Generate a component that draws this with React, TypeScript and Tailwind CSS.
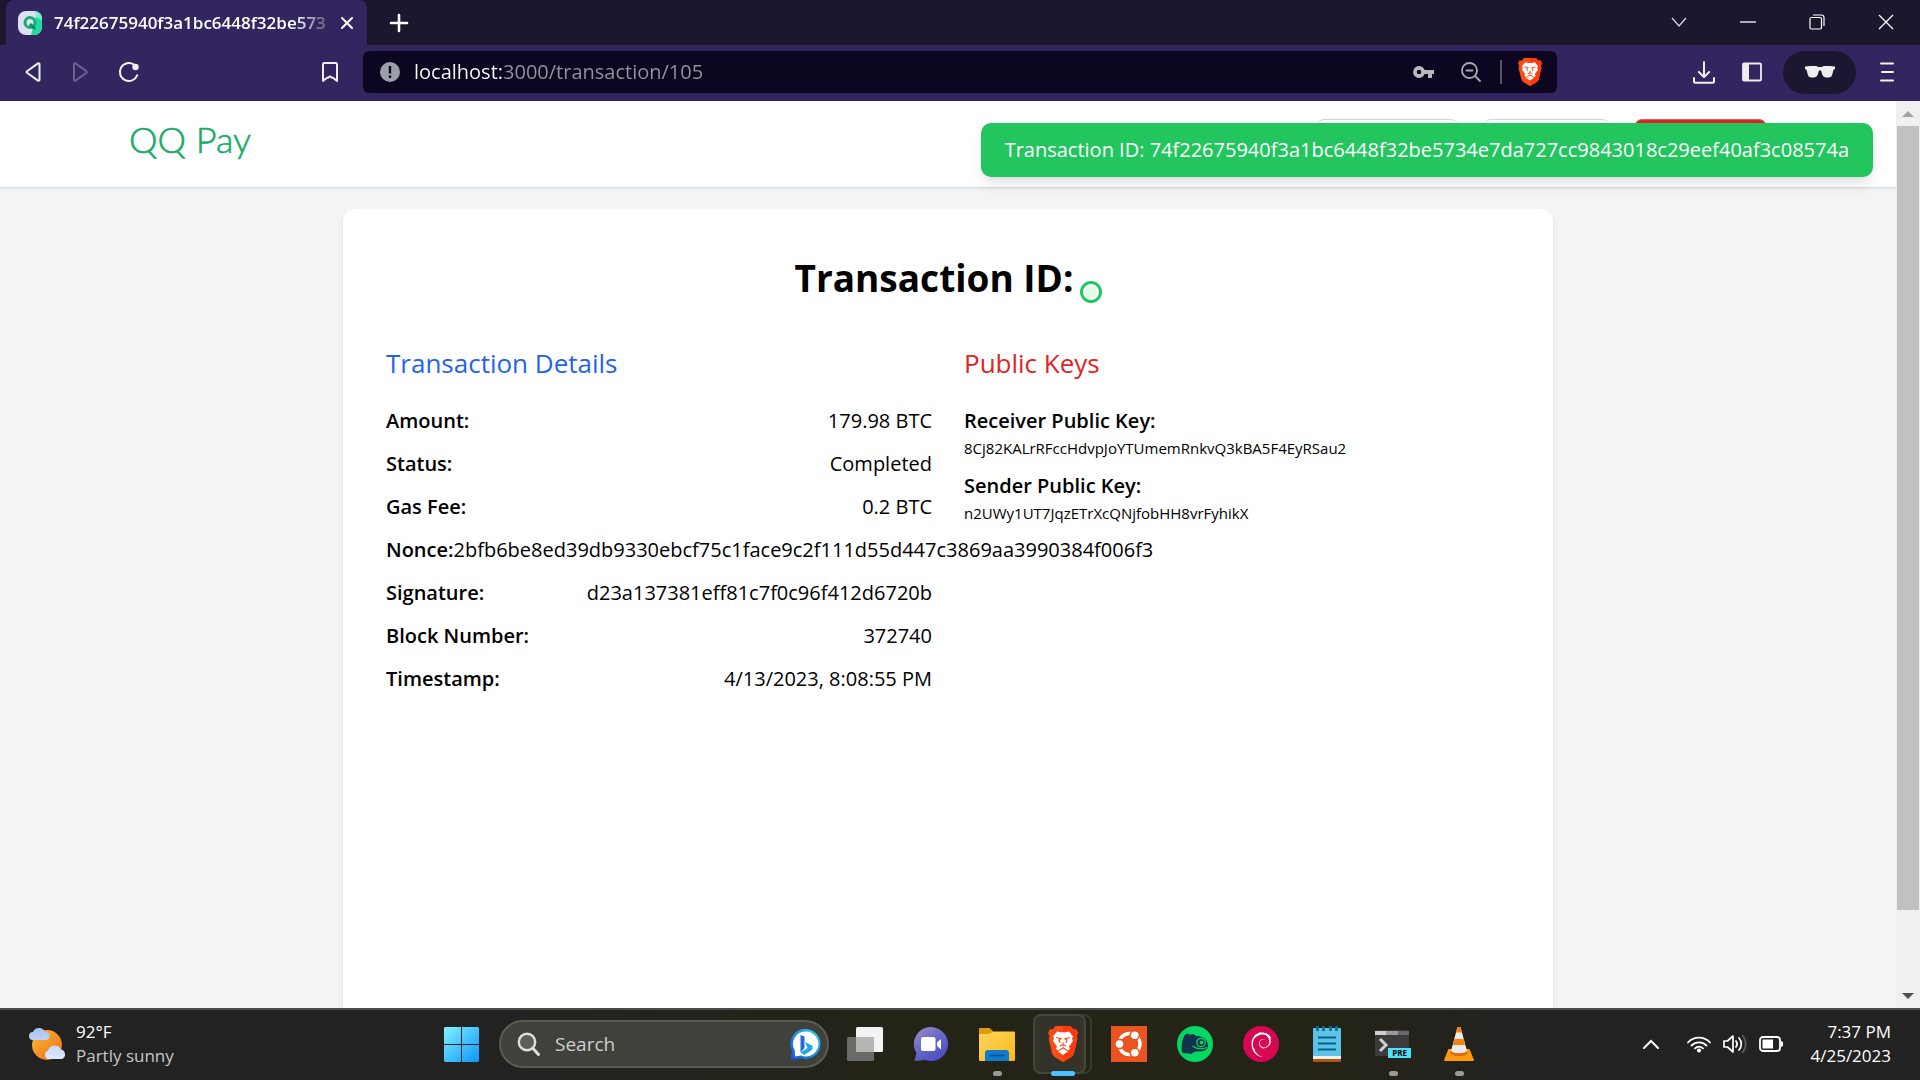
import React from "react";
import { SiDebian } from "react-icons/si";

const details: [string, string][] = [
  ["Amount:", "179.98 BTC"],
  ["Status:", "Completed"],
  ["Gas Fee:", "0.2 BTC"],
  ["Nonce:", "2bfb6be8ed39db9330ebcf75c1face9c2f111d55d447c3869aa3990384f006f3"],
  ["Signature:", "d23a137381eff81c7f0c96f412d6720b"],
  ["Block Number:", "372740"],
  ["Timestamp:", "4/13/2023, 8:08:55 PM"],
];

const keys: [string, string][] = [
  ["Receiver Public Key:", "8Cj82KALrRFccHdvpJoYTUmemRnkvQ3kBA5F4EyRSau2"],
  ["Sender Public Key:", "n2UWy1UT7JqzETrXcQNjfobHH8vrFyhikX"],
];

function IconButton({ label, className, children }: { label: string; className: string; children: React.ReactNode }) {
  return (
    <button type="button" aria-label={label} className={`flex shrink-0 items-center justify-center ${className}`}>
      {children}
    </button>
  );
}

function TabStrip() {
  return (
    <div className="flex h-[45px] shrink-0 bg-[#1a172e] pl-[6px] text-white">
      <div className="flex w-[361px] shrink-0 items-center rounded-t-lg bg-[#332560] pr-[6px] pl-3">
        <svg width="24" height="24" viewBox="0 0 24 24" className="shrink-0" aria-hidden="true">
          <defs>
            <clipPath id="fav">
              <rect width="24" height="24" rx="8" />
            </clipPath>
          </defs>
          <g clipPath="url(#fav)">
            <rect width="24" height="24" fill="#d9e2ee" />
            <path d="M19 2 13 24H24V2z" fill="#21dba0" />
            <path d="M17 0 24 0 24 9 18 6z" fill="#7fedc8" />
            <circle cx="12" cy="11.500" r="5" fill="none" stroke="#18a97c" strokeWidth="3" />
            <path d="m12 13 5 5" stroke="#138a66" strokeWidth="3" />
          </g>
        </svg>
        <span className="ml-3 min-w-0 flex-1 font-semibold whitespace-nowrap text-[17px] leading-6 [mask-image:linear-gradient(90deg,#000_88%,#0004)]">
          74f22675940f3a1bc6448f32be573
        </span>
        <IconButton label="Close tab" className="ml-[7px] h-8 w-7">
          <svg width="14" height="14" viewBox="0 0 14 14" stroke="#fff" strokeWidth="2" strokeLinecap="round" aria-hidden="true">
            <path d="m2 2 10 10M12 2 2 12" />
          </svg>
        </IconButton>
      </div>
      <IconButton label="New tab" className="ml-[14px] w-9">
        <svg width="20" height="20" viewBox="0 0 20 20" stroke="#fff" strokeWidth="2.600" strokeLinecap="round" aria-hidden="true">
          <path d="M10 2v16M2 10h16" />
        </svg>
      </IconButton>
      <div className="ml-auto flex pb-[2px]">
        <IconButton label="Search tabs" className="w-[69px]">
          <svg width="16" height="12" viewBox="0 0 16 12" fill="none" stroke="#ddd" strokeWidth="1.200" aria-hidden="true">
            <path d="m1 2 7 8 7-8" />
          </svg>
        </IconButton>
        <IconButton label="Minimize" className="w-[69px]">
          <svg width="16" height="16" viewBox="0 0 16 16" aria-hidden="true">
            <path d="M0 8h16" stroke="#fff" strokeWidth="1.300" />
          </svg>
        </IconButton>
        <IconButton label="Restore" className="w-[69px]">
          <svg width="16" height="16" viewBox="0 0 16 16" fill="none" stroke="#fff" strokeWidth="1.200" aria-hidden="true">
            <rect x="1" y="3.500" width="11.500" height="11.500" rx="1.500" />
            <path d="M4 1h8.500a2.500 2.500 0 0 1 2.500 2.500V12" />
          </svg>
        </IconButton>
        <IconButton label="Close window" className="w-[69px]">
          <svg width="16" height="16" viewBox="0 0 16 16" stroke="#fff" strokeWidth="1.300" aria-hidden="true">
            <path d="m1 1 14 14M15 1 1 15" />
          </svg>
        </IconButton>
      </div>
    </div>
  );
}

function Toolbar() {
  return (
    <div className="flex h-14 shrink-0 items-center bg-[#332560] pb-[2px]">
      <div className="flex w-[363px] shrink-0 items-center pr-[9px] pl-[9px]">
        <IconButton label="Back" className="h-10 w-12">
          <svg width="20" height="22" viewBox="0 0 20 22" fill="none" stroke="#eee" strokeWidth="2" strokeLinejoin="round" aria-hidden="true">
            <path d="M16.500 3v16a1 1 0 0 1-1.500.6L4 11.800a1 1 0 0 1 0-1.600L15 2.400a1 1 0 0 1 1.500.6z" />
          </svg>
        </IconButton>
        <IconButton label="Forward" className="h-10 w-12">
          <svg width="20" height="22" viewBox="0 0 20 22" fill="none" stroke="#6d628f" strokeWidth="2" strokeLinejoin="round" aria-hidden="true">
            <path d="M3 3v16a1 1 0 0 0 1.500.6l11-7.800a1 1 0 0 0 0-1.600l-11-7.800A1 1 0 0 0 3 3z" />
          </svg>
        </IconButton>
        <IconButton label="Reload" className="h-10 w-12">
          <svg width="22" height="22" viewBox="0 0 22 22" aria-hidden="true">
            <path d="M19.300 14.200A9 9 0 1 1 16 3.600" fill="none" stroke="#f2f2f2" strokeWidth="2" strokeLinecap="round" />
            <circle cx="17.500" cy="6" r="3.200" fill="#f2f2f2" />
          </svg>
        </IconButton>
        <IconButton label="Bookmark this page" className="ml-auto h-10 w-12">
          <svg width="18" height="22" viewBox="0 0 18 22" fill="none" stroke="#eee" strokeWidth="2" strokeLinejoin="round" aria-hidden="true">
            <path d="M2 3.200A1.200 1.200 0 0 1 3.200 2h11.600A1.200 1.200 0 0 1 16 3.200V20l-4-3.200H11L9 15.200 7 16.800H6L2 20z" />
          </svg>
        </IconButton>
      </div>
      <div className="flex h-[42px] min-w-0 flex-1 items-center rounded-md bg-[#0d0621] pr-[15px] pl-[17px]">
        <svg width="20" height="20" viewBox="0 0 20 20" className="shrink-0" aria-hidden="true">
          <circle cx="10" cy="10" r="10" fill="#9aa0a6" />
          <path d="M10 4v7.500M10 13.500v2.500" stroke="#0d0621" strokeWidth="2.400" />
        </svg>
        <input
          aria-label="Address"
          defaultValue="localhost:3000/transaction/105"
          className="ml-[14px] min-w-0 flex-1 bg-[linear-gradient(90deg,#fff_88px,#96939f_88px)] bg-clip-text text-[20px] leading-7 text-transparent outline-none"
        />
        <IconButton label="Passwords" className="h-8 w-12">
          <svg width="22" height="14" viewBox="0 0 22 14" aria-hidden="true">
            <path d="M12.700 5A6 6 0 1 0 12.700 9H16v4h4V9h2V5zM7 9.200a2.200 2.200 0 1 1 0-4.400 2.200 2.200 0 0 1 0 4.400z" fill="#b9b7be" />
          </svg>
        </IconButton>
        <IconButton label="Zoom" className="h-8 w-12">
          <svg width="22" height="22" viewBox="0 0 22 22" fill="none" stroke="#a9a7b0" strokeWidth="1.800" strokeLinecap="round" aria-hidden="true">
            <circle cx="9.500" cy="9.500" r="7.500" />
            <path d="m15 15 5 5M6.500 9.500h6" />
          </svg>
        </IconButton>
        <span className="ml-[5px] h-6 w-[2px] bg-[#57535f]" />
        <IconButton label="Brave Shields" className="ml-4 h-8 w-6">
          <BraveLion className="h-7 w-6" />
        </IconButton>
      </div>
      <div className="flex w-[363px] shrink-0 items-center justify-end pr-[9px]">
        <IconButton label="Downloads" className="h-10 w-12">
          <svg width="24" height="24" viewBox="0 0 24 24" fill="none" stroke="#eee" strokeWidth="2" strokeLinecap="round" strokeLinejoin="round" aria-hidden="true">
            <path d="M12 2v14.500M6.800 12l5.200 5 5.200-5M2 18v3.200a1.500 1.500 0 0 0 1.500 1.500h17a1.500 1.500 0 0 0 1.500-1.500V18" />
          </svg>
        </IconButton>
        <IconButton label="Sidebar" className="h-10 w-12">
          <svg width="20" height="20" viewBox="0 0 20 20" aria-hidden="true">
            <rect x="1" y="1.500" width="18" height="17" rx="1" fill="none" stroke="#eee" strokeWidth="1.800" />
            <path d="M1 1.500h6v17H1z" fill="#eee" />
          </svg>
        </IconButton>
        <IconButton label="Private window" className="mx-[7px] h-[43px] w-[73px] rounded-full bg-[#1c1731]">
          <svg width="30" height="12" viewBox="0 0 30 12" aria-hidden="true">
            <path d="M0 .5 5 0h6l2.500 1h3L19 0h6l5 .5v2.500l-1.500.8-1.300 5A3.500 3.500 0 0 1 24 11.500h-3a4 4 0 0 1-3.700-2.700L16.200 5a1.300 1.300 0 0 0-2.400 0l-1.100 3.800A4 4 0 0 1 9 11.500H6a3.500 3.500 0 0 1-3.200-2.700L1.500 3.800 0 3z" fill="#eee" />
          </svg>
        </IconButton>
        <IconButton label="Menu" className="h-10 w-12">
          <svg width="16" height="20" viewBox="0 0 16 20" stroke="#f2f2f2" strokeWidth="2" strokeLinecap="round" aria-hidden="true">
            <path d="M2 1.500h12M3 10h11M2 18.500h12" />
          </svg>
        </IconButton>
      </div>
    </div>
  );
}

function BraveLion({ className }: { className: string }) {
  return (
    <svg viewBox="0 0 30 36" preserveAspectRatio="none" className={className} aria-hidden="true">
      <path d="M7.500 0h15l3 3.500 2.500-.5 2 4-1.500 3 .8 3L26 27c-.5 2-2 3.500-3.500 4.500L15 36l-7.500-4.500C6 30.500 4.500 29 4 27L.7 13l.8-3L0 7l2-4 2.500.5z" fill="#fb4c13" />
      <path d="M15 0h7.500l3 3.500 2.500-.5 2 4-1.500 3 .8 3L26 27c-.5 2-2 3.500-3.500 4.500L15 36z" fill="#ff3a10" />
      <path d="m9 5.500 3.500.8h5L21 5.500l4 5-1 2 1 2.500-4 5.500 1 2.500-2 1.500-5-3.500-5 3.500-2-1.500 1-2.500L5 15l1-2.500-1-2z" fill="#fff" />
      <path d="m15 22.500 5 3-5 3.500-5-3.500z" fill="#fff" />
      <path d="m8 11.500 5 1.200-2 1.300 1 2.800M22 11.500l-5 1.200 2 1.300-1 2.800M12 20l3-1 3 1M15 16.500V19" fill="none" stroke="#fb4c13" strokeWidth="1.200" />
    </svg>
  );
}

function SiteHeader() {
  return (
    <header className="flex h-[86px] items-start justify-between bg-white px-[129px] pt-[18px] shadow-sm">
      <a href="#home" className="font-[Lato] text-[36px] leading-10 font-light text-[#1bab68] [-webkit-text-stroke:0.6px_#1bab68]">
        QQ Pay
      </a>
      <nav className="flex gap-6">
        <button type="button" aria-label="Dashboard" className="h-[50px] w-[143px] rounded-lg border border-[#d1d5db]" />
        <button type="button" aria-label="Profile" className="h-[50px] w-[127px] rounded-lg border border-[#d1d5db]" />
        <button type="button" aria-label="Log out" className="h-[50px] w-[133px] rounded-lg border border-[#e05a5a] bg-[#dc2626]" />
      </nav>
    </header>
  );
}

function TransactionCard() {
  return (
    <main className="mx-auto mt-[22px] min-h-[1000px] w-[1210px] max-w-full rounded-xl bg-white px-[43px] pt-[44px] text-black shadow-md">
      <h1 className="flex items-end justify-center gap-[6px] text-[37px] leading-[50px] font-bold">
        Transaction ID:
        <button
          type="button"
          aria-label="Show transaction ID"
          className="size-[22px] rounded-full border-[3px] border-[#22c55e] bg-[#dcfce7] bg-clip-content p-[2px]"
        />
      </h1>
      <div className="mt-[41px] grid grid-cols-2 gap-8">
        <section>
          <h2 className="mb-[23px] text-[26px] leading-[38px] font-medium text-[#2563eb]">Transaction Details</h2>
          <dl>
            {details.map(([name, value]) => (
              <div key={name} className="mb-[11px] flex justify-between text-[20px] leading-8">
                <dt className="font-semibold">{name}</dt>
                <dd>{value}</dd>
              </div>
            ))}
          </dl>
        </section>
        <section>
          <h2 className="mb-[23px] text-[26px] leading-[38px] font-medium text-[#dc2626]">Public Keys</h2>
          <dl>
            {keys.map(([name, value]) => (
              <div key={name} className="mb-[11px]">
                <dt className="text-[20px] leading-8 font-semibold">{name}</dt>
                <dd className="text-[15px] leading-[22px]">{value}</dd>
              </div>
            ))}
          </dl>
        </section>
      </div>
    </main>
  );
}

function ScrollBar() {
  return (
    <div className="flex w-6 shrink-0 flex-col items-center bg-[#f0f0f0]" aria-hidden="true">
      <svg width="12" height="25" viewBox="0 0 12 25">
        <path d="m0 16 6-6 6 6z" fill="#a3a3a3" />
      </svg>
      <div className="w-[22px] flex-[784] bg-[#c1c1c1]" />
      <div className="flex-[73]" />
      <svg width="12" height="25" viewBox="0 0 12 25">
        <path d="m0 10 6 6 6-6z" fill="#505050" />
      </svg>
    </div>
  );
}

function TaskApp({ label, running, children }: { label: string; running?: boolean; children: React.ReactNode }) {
  return (
    <button type="button" aria-label={label} className="relative flex h-[66px] w-[66px] items-center justify-center">
      {children}
      {running && <span className="absolute bottom-[1px] h-[5px] w-[9px] rounded-full bg-[#9a9a98]" />}
    </button>
  );
}

function Taskbar() {
  return (
    <footer className="grid h-[72px] shrink-0 grid-cols-[1fr_auto_1fr] items-center border-t-2 border-[#4a4a46] bg-[linear-gradient(90deg,#222_25%,#242318_45%,#242318_70%,#222_80%)] pb-[2px] text-white">
      <button type="button" className="flex items-center gap-[10px] pl-[29px] text-left">
        <svg width="37" height="34" viewBox="0 0 37 34" aria-hidden="true">
          <defs>
            <linearGradient id="sun" x1="0" y1="0" x2="1" y2="1">
              <stop offset="0" stopColor="#f8bc3c" />
              <stop offset="1" stopColor="#ef6a10" />
            </linearGradient>
            <linearGradient id="cloud" x1="0" y1="0" x2="0" y2="1">
              <stop offset="0" stopColor="#a9c3f3" />
              <stop offset="1" stopColor="#dce9fb" />
            </linearGradient>
          </defs>
          <circle cx="18" cy="18" r="15" fill="url(#sun)" />
          <path d="M4 13a4 4 0 0 1 0-8 6.500 6.500 0 0 1 12 0 4 4 0 0 1 1 8zM19 32a4.500 4.500 0 0 1 0-8.500 7 7 0 0 1 13-1 5 5 0 0 1 1 9.500z" fill="url(#cloud)" />
        </svg>
        <span className="flex flex-col text-[17px] leading-6">
          <span>92°F</span>
          <span className="text-[#c6c6c6]">Partly sunny</span>
        </span>
      </button>
      <div className="flex items-center">
        <IconButton label="Start" className="h-[66px] w-[66px]">
          <svg width="35" height="35" viewBox="0 0 35 35" aria-hidden="true">
            <defs>
              <linearGradient id="win" x1="0" y1="0" x2="35" y2="35" gradientUnits="userSpaceOnUse">
                <stop offset="0" stopColor="#80f2ff" />
                <stop offset="1" stopColor="#0c95fb" />
              </linearGradient>
            </defs>
            <path d="M1 0h16v17H0V1zM18 0h16l1 1v16H18zM0 18h17v17H1l-1-1zM18 18h17v16l-1 1H18z" fill="url(#win)" />
          </svg>
        </IconButton>
        <label className="mr-[3px] ml-[5px] flex h-12 w-[330px] items-center rounded-full border-2 border-[#5a5a55] bg-[#41413b] pr-[6px] pl-[16px]">
          <svg width="24" height="24" viewBox="0 0 24 24" fill="none" stroke="#dedede" strokeLinecap="round" aria-hidden="true">
            <circle cx="10" cy="10" r="8.200" strokeWidth="2.400" fill="#5d5d5a" />
            <path d="m16.500 17 5 5.500" strokeWidth="3" />
          </svg>
          <input
            aria-label="Search"
            placeholder="Search"
            className="ml-[14px] min-w-0 flex-1 bg-transparent text-[19px] leading-7 outline-none placeholder:text-[#cfcfcf]"
          />
          <svg width="31" height="31" viewBox="0 0 31 31" aria-hidden="true">
            <defs>
              <linearGradient id="bing" x1="1" y1="0" x2="0" y2="1">
                <stop offset="0" stopColor="#2bd6e8" />
                <stop offset="0.500" stopColor="#1f8fea" />
                <stop offset="1" stopColor="#1a4fd0" />
              </linearGradient>
            </defs>
            <path d="M16 0a15 15 0 1 1-5 29.300c-3 .7-7 1.500-10.500 1.200L2 22A15 15 0 0 1 16 0z" fill="url(#bing)" />
            <path d="M16 2.500A12.500 12.500 0 1 1 11 26.500L5 27.500l-.2-6A12.500 12.500 0 0 1 16 2.500z" fill="#fff" />
            <path d="m10.500 6 4 1.500V19l-4 4.500z" fill="#1e6be0" />
            <path d="m10.500 23.500 7-4.500-2.500-6 7 3.500c1.500 2 .5 4.500-1.500 5.500L14 26z" fill="#24a8e8" />
          </svg>
        </label>
        <TaskApp label="Task view">
          <svg width="36" height="34" viewBox="0 0 36 34" aria-hidden="true">
            <rect x="9" y="0" width="27" height="25" rx="1.500" fill="#f3f3f3" />
            <rect x="0" y="10" width="27" height="24" rx="1.500" fill="#6a6a68" />
            <path d="M9 10h18v15H9z" fill="#b5b5b4" />
          </svg>
        </TaskApp>
        <TaskApp label="Chat">
          <svg width="34" height="34" viewBox="0 0 34 34" aria-hidden="true">
            <defs>
              <linearGradient id="chat" x1="0" y1="0" x2="0.700" y2="1">
                <stop offset="0" stopColor="#a08ec4" />
                <stop offset="0.500" stopColor="#6b6ac8" />
                <stop offset="1" stopColor="#4a4fc4" />
              </linearGradient>
            </defs>
            <path d="M17 0a17 17 0 1 1-6.500 32.700c-3 .8-7 1.300-10 1L2.500 26A17 17 0 0 1 17 0z" fill="url(#chat)" />
            <rect x="7" y="10" width="14.500" height="14" rx="2" fill="#fff" />
            <path d="M23 15.500 27 12v10.500L23 19z" fill="#fff" />
          </svg>
        </TaskApp>
        <TaskApp label="File Explorer" running>
          <svg width="36" height="33" viewBox="0 0 36 33" aria-hidden="true">
            <defs>
              <linearGradient id="folder" x1="0" y1="0" x2="1" y2="1">
                <stop offset="0" stopColor="#ffd45c" />
                <stop offset="1" stopColor="#f9b91c" />
              </linearGradient>
            </defs>
            <path d="M0 1a1 1 0 0 1 1-1h9.500l4 3.500L10 8H0z" fill="#e09b08" />
            <path d="M0 6h10l4.500-2.500H35a1 1 0 0 1 1 1V32a1 1 0 0 1-1 1H1a1 1 0 0 1-1-1z" fill="url(#folder)" />
            <path d="M6 33v-8a3 3 0 0 1 3-3h18a3 3 0 0 1 3 3v8z" fill="#0f7bcf" />
            <path d="M10.500 27.500h15" stroke="#0a4f94" strokeWidth="1.800" />
          </svg>
        </TaskApp>
        <div className="relative flex h-[66px] w-[66px] items-center">
          <span className="absolute top-[3px] left-[3px] h-[60px] w-[59px] rounded-lg border-2 border-[#3a392f]" />
          <button type="button" aria-label="Brave" className="relative ml-[3px] flex h-[60px] w-[53px] items-center justify-center rounded-lg border-2 border-[#46463c] bg-[#33332a] pl-[7px]">
            <BraveLion className="h-9 w-[30px]" />
          </button>
          <span className="absolute bottom-[1px] left-[21px] h-[5px] w-6 rounded-full bg-[#4cc2ff]" />
        </div>
        <TaskApp label="Ubuntu">
          <span className="flex size-9 items-center justify-center bg-[#e95420]">
            <svg width="28" height="28" viewBox="0 0 28 28" aria-hidden="true">
              <circle cx="14.500" cy="14" r="10.500" fill="none" stroke="#fff" strokeWidth="3.400" />
              <g fill="#fff" stroke="#e95420" strokeWidth="1.600">
                <circle cx="4.500" cy="14" r="4.600" />
                <circle cx="19.800" cy="5.200" r="4.600" />
                <circle cx="19.800" cy="22.800" r="4.600" />
              </g>
            </svg>
          </span>
        </TaskApp>
        <TaskApp label="openSUSE">
          <span className="flex size-9 items-center justify-center rounded-full bg-[#06d662]">
            <svg width="28" height="24" viewBox="0 0 28 24" aria-hidden="true">
              <path d="M5 2c3-.5 4 .5 5 1.500C10 1 13 2 15 4c6 0 11 2.500 12 9 .5 4-4 6.500-9 6.500-4 0-6 .5-7.500 2.500C7 21 4 22 1 20.500 0 14 1 5 5 2z" fill="#12344a" />
              <circle cx="20" cy="10.500" r="4.200" fill="none" stroke="#06d662" strokeWidth="1.300" />
              <circle cx="20.500" cy="10.500" r="1.800" fill="#06d662" />
              <path d="M11.500 14c4 3 9 3.500 14.500 1.500" fill="none" stroke="#06d662" strokeWidth="1.200" />
            </svg>
          </span>
        </TaskApp>
        <TaskApp label="Debian">
          <span className="flex size-9 items-center justify-center rounded-full bg-[#d70751]">
            <SiDebian className="size-[25px] text-white" />
          </span>
        </TaskApp>
        <TaskApp label="Notepad">
          <svg width="28" height="36" viewBox="0 0 28 36" aria-hidden="true">
            <path d="M0 31h28v4a1 1 0 0 1-1 1H1a1 1 0 0 1-1-1z" fill="#b3560c" />
            <path d="M0 28h28v5H0z" fill="#eef1f2" />
            <rect y="2" width="28" height="28" rx="1" fill="#5cc3e6" />
            <path d="M4.500 0v5M10.500 0v5M17.500 0v5M23.500 0v5" stroke="#0b6e96" strokeWidth="2.600" />
            <path d="M5 11.500h18M5 17.500h18M5 23.500h18" stroke="#07628a" strokeWidth="2" />
          </svg>
        </TaskApp>
        <TaskApp label="Terminal Preview" running>
          <span className="relative block h-7 w-9">
            <svg width="36" height="28" viewBox="0 0 36 28" aria-hidden="true">
              <rect width="34" height="26" rx="1.500" fill="#3b3b3b" />
              <path d="M0 1h11v4H0z" fill="#cfcfcf" />
              <path d="M11 1h12v4H11z" fill="#9b9b9b" />
              <path d="M23 1h11v4H23z" fill="#686868" />
              <path d="m5 9 6 6-6 6" fill="none" stroke="#cfcfcf" strokeWidth="3" />
            </svg>
            <span className="absolute right-0 bottom-0 bg-[#4fe1fb] px-[4px] text-[8px] leading-[10px] font-bold text-black">PRE</span>
          </span>
        </TaskApp>
        <TaskApp label="VLC" running>
          <svg width="30" height="34" viewBox="0 0 30 34" aria-hidden="true">
            <path d="M4.500 22h21L30 33a1 1 0 0 1-1 1H1a1 1 0 0 1-1-1z" fill="#fb9a0c" />
            <path d="M13.500 0h3l6.500 24c-2 4-14 4-16 0z" fill="#ececec" />
            <path d="M13.500 0h3L18 5.500h-6zM10.500 12h9l1.600 6H8.900z" fill="#f5820a" />
            <path d="M7 24c2 3 14 3 16 0l.8 2.200c-3 4-14.600 4-17.600 0z" fill="#e26a05" />
          </svg>
        </TaskApp>
      </div>
      <div className="flex items-center justify-end pr-[29px]">
        <IconButton label="Show hidden icons" className="h-10 w-8">
          <svg width="16" height="10" viewBox="0 0 16 10" fill="none" stroke="#fff" strokeWidth="2" strokeLinecap="round" aria-hidden="true">
            <path d="m1 9 7-7 7 7" />
          </svg>
        </IconButton>
        <button type="button" aria-label="Network, volume and battery" className="ml-5 flex items-center gap-3">
          <svg width="24" height="18" viewBox="0 0 24 18" fill="none" stroke="#fff" strokeWidth="1.800" strokeLinecap="round" aria-hidden="true">
            <path d="M1 7.500a15 15 0 0 1 22 0M4.500 10.500a10.500 10.500 0 0 1 15 0M8 13.300a6 6 0 0 1 8 0" />
            <circle cx="12" cy="15.500" r="1.200" fill="#fff" />
          </svg>
          <svg width="24" height="20" viewBox="0 0 24 20" fill="none" stroke="#fff" strokeWidth="1.700" strokeLinecap="round" strokeLinejoin="round" aria-hidden="true">
            <path d="M1 7v6h3.500l5.500 5V2L4.500 7zM13 7a5 5 0 0 1 0 6M16 4a9 9 0 0 1 0 12" />
            <path d="M19.500 1.500a13 13 0 0 1 0 17" stroke="#5c5c5c" />
          </svg>
          <svg width="24" height="16" viewBox="0 0 24 16" aria-hidden="true">
            <rect x="1" y="1" width="20" height="14" rx="3" fill="none" stroke="#fff" strokeWidth="1.800" />
            <path d="M3.500 3.500h10.500v9H3.500zM22 5l2 1v4l-2 1z" fill="#fff" />
          </svg>
        </button>
        <button type="button" className="ml-[27px] flex flex-col items-end text-[17px] leading-6">
          <span>7:37 PM</span>
          <span>4/25/2023</span>
        </button>
      </div>
    </footer>
  );
}

export default function App() {
  return (
    <div className="flex h-screen flex-col overflow-hidden bg-[#f3f4f6] font-['Open_Sans','Noto_Sans',sans-serif]">
      <TabStrip />
      <Toolbar />
      <div className="flex min-h-0 flex-1">
        <div className="relative min-w-0 flex-1 overflow-hidden">
          <SiteHeader />
          <TransactionCard />
          <div role="status" className="absolute top-[22px] right-[23px] rounded-[10px] bg-[#22c55e] px-[24px] py-[11px] text-[20px] leading-8 text-white shadow-lg">
            Transaction ID: 74f22675940f3a1bc6448f32be5734e7da727cc9843018c29eef40af3c08574a
          </div>
        </div>
        <ScrollBar />
      </div>
      <Taskbar />
    </div>
  );
}
